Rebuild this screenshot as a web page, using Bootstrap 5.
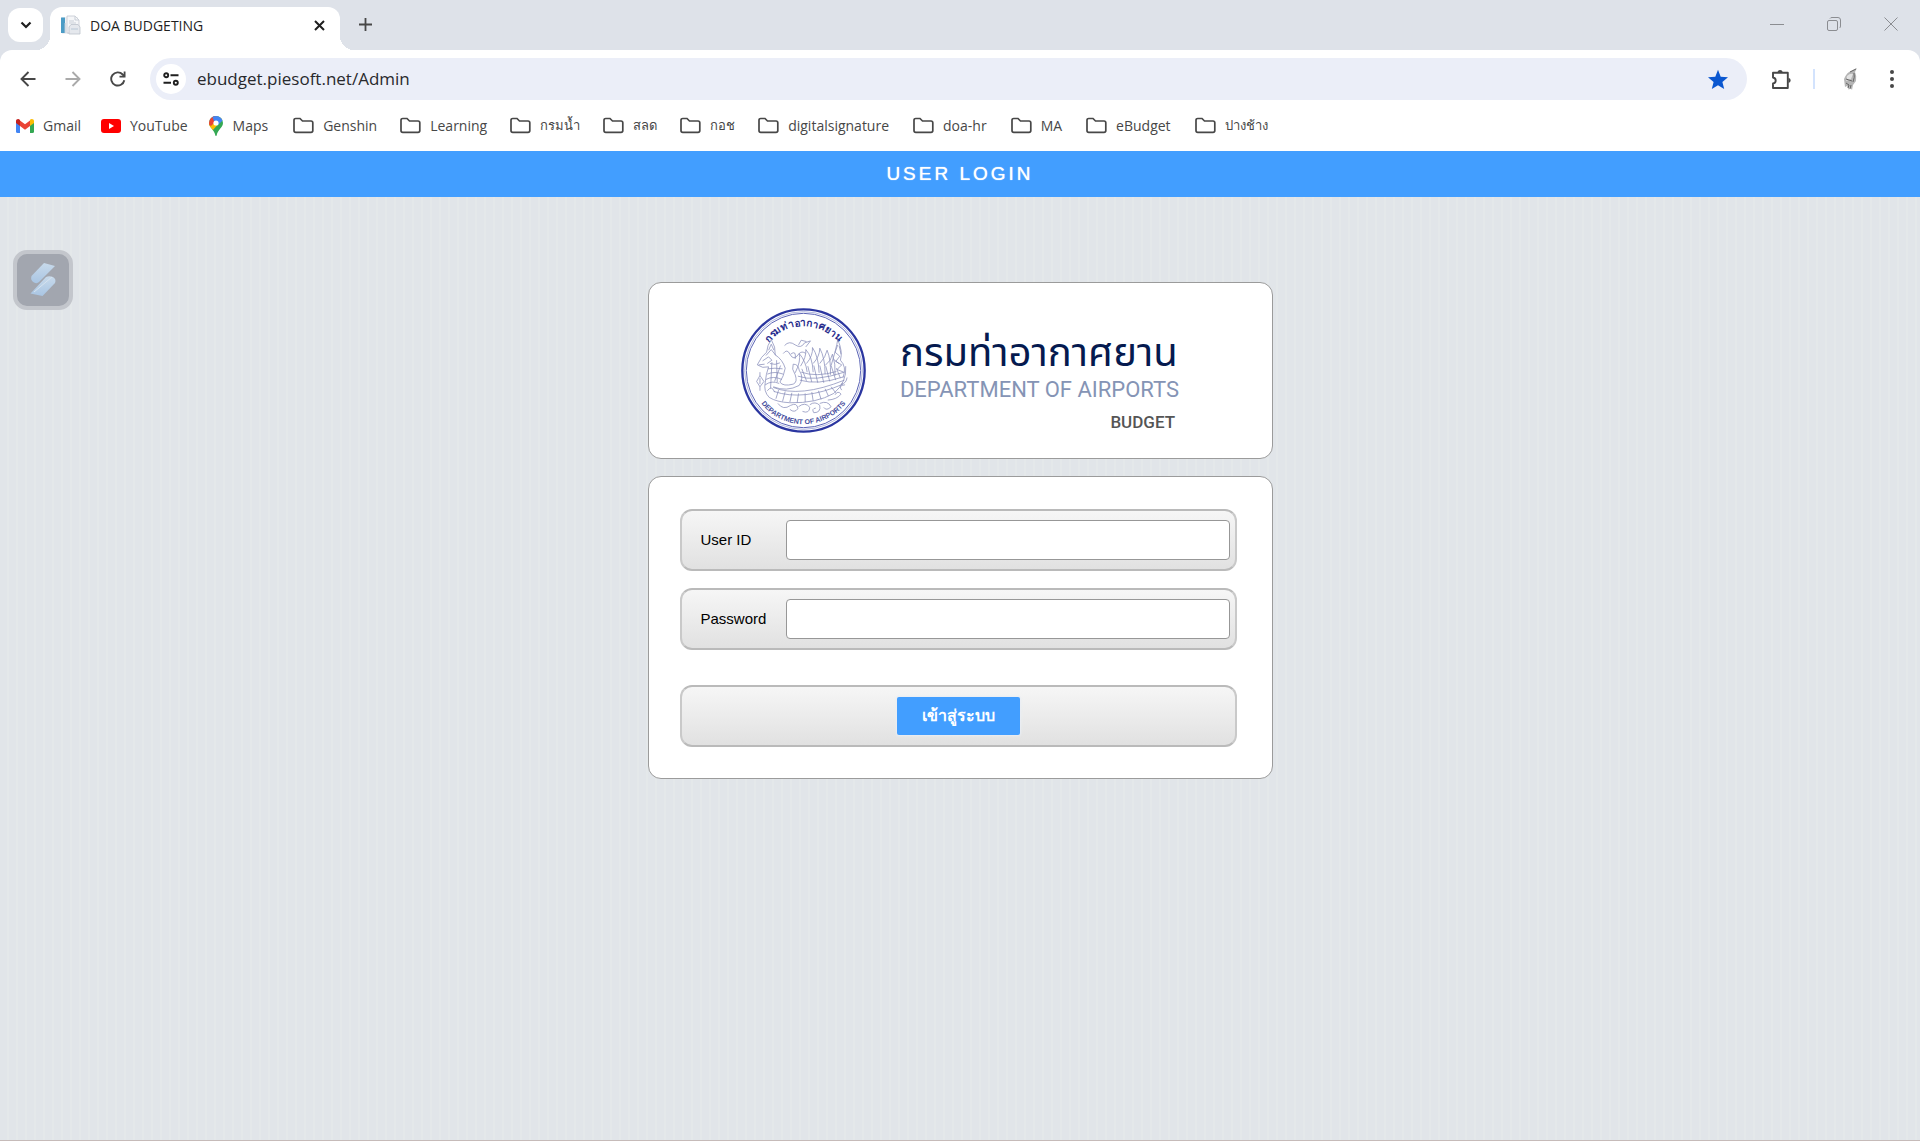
<!DOCTYPE html>
<html lang="th">
<head>
<meta charset="utf-8">
<meta name="viewport" content="width=device-width, initial-scale=1">
<title>DOA BUDGETING</title>
<link href="https://cdn.jsdelivr.net/npm/bootstrap@5.3.0/dist/css/bootstrap.min.css" rel="stylesheet">
<style>
body{font-family:"Liberation Sans",Arial,sans-serif;background:#fff;color:#000}
svg{display:block;flex:none}
.chrome-ui{font-family:"Open Sans","Noto Sans",sans-serif;color:#474747}
.plain-btn{border:0;background:none;padding:0;color:inherit;display:flex}
.tab-strip{height:50px;background:#dee2e9;padding-left:8px}
.tab-search{width:35px;height:34px;border-radius:12px;background:#fff;margin:8px 7px 0 0;color:#1f1f1f}
.page-tab{position:relative;width:290px;height:43px;margin-top:7px;padding:0 15px 7px 10px;border-radius:12px 12px 0 0;background:#fff;color:#1f1f1f;font-size:14px;gap:9px}
.page-tab::before,.page-tab::after{content:"";position:absolute;bottom:0;width:14px;height:14px}
.page-tab::before{right:100%;background:radial-gradient(circle at 0 0,transparent 14px,#fff 14px)}
.page-tab::after{left:100%;background:radial-gradient(circle at 100% 0,transparent 14px,#fff 14px)}
.new-tab{margin:18px 0 0 19px}
.win-controls{gap:43px;padding:17px 22px 0 0;color:#8b8d91}
.tool-wrap{background:#dee2e9}
.tool-row{background:#fff;border-radius:12px 12px 0 0;padding:8px 22px 0 20px}
.nav-icons{gap:29px;margin-right:24px}
.address{height:42px;border-radius:21px;background:#ebeef8;padding:0 18px 0 6px}
.site-info{width:30px;height:30px;border-radius:50%;background:#fff;margin-right:11px;color:#1f1f1f}
.address input{border:0;background:none;outline:0;padding:0;font-size:17px;color:#28292c;min-width:0}
.ext-icons{padding-left:24px}
.ext-rule{width:2px;height:20px;background:#d3e3fd;margin:0 25px 0 21px}
.menu-btn{margin-left:26px}
.marks{height:51px;background:#fff;padding:0 16px;gap:23px;font-size:14px}
.marks a{color:#474747;text-decoration:none;display:flex;align-items:center;gap:9px;white-space:nowrap}
.marks .thai{font-size:13px}
.site-links{gap:20px;margin-right:2px}
.folder-links{gap:24px;margin-left:1px}
.login-bar{height:46px;background:#429eff;color:#fff;font-size:19px;letter-spacing:3px;text-shadow:0 0 1px #fff}
.stage{background:repeating-linear-gradient(90deg,transparent 0 7px,#e4e8ea 7px 9px),#e1e5e9;border-bottom:1px solid #c6bbb9;padding-top:85px}
.floater{position:absolute;left:13px;top:53px;width:60px;height:60px;border:4px solid #c3c6cc;border-radius:14px;background:#a2a6af;padding:0}
.login-col{width:100%;max-width:625px;gap:17px}
.panel{background:#fff;border:1px solid #9b9b9b;border-radius:13px}
.brand{height:177px;gap:34px}
.brand-text{padding-top:22px}
.brand-th{font-family:"Noto Sans Thai","Noto Sans",sans-serif;font-size:40px;line-height:50px;color:#051a4f;white-space:nowrap}
.brand-en{font-family:Roboto,sans-serif;font-size:22px;line-height:22px;color:#8594b5;white-space:nowrap}
.brand-sub{font-family:Roboto,sans-serif;font-size:17px;line-height:24px;color:#555;font-weight:500;margin-top:9px;padding-right:4px}
.form-panel{padding:32px 35px 31px 31px;gap:17px}
.field-row{height:62px;border:2px solid;border-color:#bababa #c9c9c9;border-radius:12px;background:linear-gradient(#f6f6f6,#e1e1e1);padding:0 5px 0 19px}
.field-row label{width:85px;font-size:15px}
.field-row input{height:40px;border:1px solid #979797;border-radius:4px;background:#fff;padding:0 8px;min-width:0}
.submit-row{margin-top:18px;padding:0}
.enter-btn{height:38px;width:123px;border:0;border-radius:2px;background:#429eff;color:#fff;font-size:16px;font-weight:700;padding:0;box-shadow:0 0 2px 1px #e9eef4}
</style>
<script src="https://cdn.jsdelivr.net/npm/bootstrap@5.3.0/dist/js/bootstrap.bundle.min.js"></script>
</head>
<body class="d-flex flex-column min-vh-100">
<svg width="0" height="0" class="position-absolute" aria-hidden="true"><defs>
<symbol id="folder" viewBox="0 0 21 17"><path d="M1 3.2C1 2 1.8 1.5 2.700 1.500H7L9.500 4H18Q19.800 4 19.800 5.800V13.500Q19.800 15.300 18 15.300H2.800Q1 15.300 1 13.500Z" fill="none" stroke="#474747" stroke-width="1.700"/></symbol>
</defs></svg>
<header class="chrome-ui">
  <div class="tab-strip d-flex align-items-start">
    <button class="plain-btn tab-search align-items-center justify-content-center" aria-label="Search tabs"><svg width="12" height="8" viewBox="0 0 12 8"><path d="M1.500 1.500 6 6l4.500-4.500" fill="none" stroke="currentColor" stroke-width="2.200"/></svg></button>
    <div class="page-tab d-flex align-items-center">
      <svg width="21" height="20" viewBox="0 0 21 20"><path d="M2 2H18V19H2Z" fill="#eef0f3"/><path d="M1 2.500H5V18H1Z" fill="#4b9cc6"/><path d="M7 1H15L19 5V18H7Z" fill="#f5f6f8" stroke="#c3c8d0" stroke-width=".8"/><path d="M15 1V5H19M9 6H14M9 8H16" fill="none" stroke="#c9cfd8"/><path d="M9 12 11 9.500H18L20 12V19H9Z" fill="#e5e8ed" stroke="#bdc3cc" stroke-width=".8"/><path d="M11 14H18M5 8V18" stroke="#b8c7d6"/></svg>
      <span class="flex-grow-1">DOA BUDGETING</span>
      <button class="plain-btn" aria-label="Close tab"><svg width="11" height="11" viewBox="0 0 11 11"><path d="M1 1 10 10M10 1 1 10" stroke="currentColor" stroke-width="2"/></svg></button>
    </div>
    <button class="plain-btn new-tab" aria-label="New tab"><svg width="13" height="13" viewBox="0 0 13 13"><path d="M6.500 0V13M0 6.500H13" stroke="currentColor" stroke-width="1.800"/></svg></button>
    <div class="win-controls d-flex ms-auto">
      <button class="plain-btn" aria-label="Minimize"><svg width="14" height="14" viewBox="0 0 14 14"><path d="M0 7.500H14" stroke="currentColor"/></svg></button>
      <button class="plain-btn" aria-label="Restore"><svg width="14" height="14" viewBox="0 0 14 14"><rect x=".5" y="3.500" width="10" height="10" rx="1.500" fill="none" stroke="currentColor"/><path d="M3 1.500Q3.500.5 5 .5H11Q13.500.5 13.500 3V9Q13.500 10.500 12.500 11" fill="none" stroke="currentColor"/></svg></button>
      <button class="plain-btn" aria-label="Close"><svg width="14" height="14" viewBox="0 0 14 14"><path d="M.5.5 13.500 13.500M13.500.5.5 13.500" stroke="currentColor"/></svg></button>
    </div>
  </div>
  <div class="tool-wrap"><div class="tool-row d-flex align-items-center">
    <div class="nav-icons d-flex align-items-center">
      <button class="plain-btn" aria-label="Back"><svg width="16" height="16" viewBox="0 0 16 16"><path d="M15.500 8H1.500M8.500 1 1.500 8l7 7" fill="none" stroke="currentColor" stroke-width="1.900"/></svg></button>
      <button class="plain-btn" aria-label="Forward"><svg width="16" height="16" viewBox="0 0 16 16"><path d="M.5 8H14.500M7.500 1l7 7-7 7" fill="none" stroke="#aaa" stroke-width="1.900"/></svg></button>
      <button class="plain-btn" aria-label="Reload"><svg width="16" height="16" viewBox="0 0 16 16"><path d="M14.300 9.200A6.600 6.600 0 1 1 12.700 3.500L14.500 5.500" fill="none" stroke="currentColor" stroke-width="1.900"/><path d="M15.500.5V6.500H9.500V4.800H13.700V.5Z" fill="currentColor"/></svg></button>
    </div>
    <div class="address flex-grow-1 d-flex align-items-center">
      <button class="plain-btn site-info align-items-center justify-content-center" aria-label="Site information"><svg width="16" height="14" viewBox="0 0 16 14"><g fill="none" stroke="currentColor" stroke-width="1.900"><circle cx="3.200" cy="3.200" r="2"/><path d="M7.500 3.200H15.500M.5 10.800H8"/><circle cx="12.800" cy="10.800" r="2"/></g></svg></button>
      <input class="flex-grow-1" type="text" aria-label="Address" value="ebudget.piesoft.net/Admin">
      <button class="plain-btn" aria-label="Bookmarked"><svg width="22" height="21" viewBox="0 0 22 21"><path d="M11 .8 13.700 7.700 21 8.300 15.400 13 17.200 20 11 16.200 4.800 20 6.600 13 1 8.300 8.300 7.700Z" fill="#0b57d0"/></svg></button>
    </div>
    <div class="ext-icons d-flex align-items-center">
      <button class="plain-btn" aria-label="Extensions"><svg width="21" height="21" viewBox="0 0 21 21"><path d="M2 3.800H16.800V19H2V14.500C5.600 14 5.600 9 2 8.500Z" fill="none" stroke="#474747" stroke-width="1.900" stroke-linejoin="round"/><path d="M6.500 3A2.700 2.700 0 0 1 11.700 3ZM17.500 8.700A2.700 2.700 0 0 1 17.500 14Z" fill="#474747"/></svg></button>
      <span class="ext-rule"></span>
      <button class="plain-btn" aria-label="Profile"><svg width="20" height="24" viewBox="0 0 20 24"><path d="M4 12Q7 5 11 4 15 2 17 1L15 5Q17 9 16 14L13 18 12 23 10 20 9 23 7 19 5 20Z" fill="#b5b5b5"/><path d="M7 9Q10 6 13 7L11 12 6 14Z" fill="#e2e2e2"/><path d="M6 16 9 18 8 21M14 6Q15 10 13 15M11 18 10 22M6 12 12 14M10 5 16 2" fill="none" stroke="#666" stroke-width="1"/></svg></button>
      <button class="plain-btn menu-btn" aria-label="Menu"><svg width="12" height="20" viewBox="0 0 12 20" fill="#474747"><circle cx="6" cy="3" r="2"/><circle cx="6" cy="10" r="2"/><circle cx="6" cy="17" r="2"/></svg></button>
    </div>
  </div></div>
  <nav class="marks d-flex align-items-center" aria-label="Bookmarks">
    <div class="site-links d-flex align-items-center">
      <a href="#"><svg width="18" height="14" viewBox="0 0 18 14"><path d="M0 2V12.500Q0 14 1.500 14H4V5Z" fill="#4285f4"/><path d="M18 2V12.500Q18 14 16.500 14H14V5Z" fill="#34a853"/><path d="M14 1.500V7L18 4V2C18 0 15.500-.6 14 .7Z" fill="#fbbc04"/><path d="M4 7V1.500L9 5.300 14 1.500V7L9 10.800Z" fill="#ea4335"/><path d="M0 2V4L4 7V.9C2.500-.6 0 0 0 2Z" fill="#c5221f"/></svg>Gmail</a>
      <a href="#"><svg width="20" height="14" viewBox="0 0 20 14"><rect width="20" height="14" rx="3" fill="#f00"/><path d="M8 4V10L13 7Z" fill="#fff"/></svg>YouTube</a>
      <a href="#"><svg width="16" height="20" viewBox="0 0 16 20"><clipPath id="pinShape"><path d="M8 0A7 7 0 0 1 15 7C15 11.500 10 13 8.600 19.500Q8 20.500 7.400 19.500C6 13 1 11.500 1 7A7 7 0 0 1 8 0Z"/></clipPath><g clip-path="url(#pinShape)"><path d="M0 0H16V20H0Z" fill="#34a853"/><path d="M0 13V6L8 7 14 0V4L4 15Z" fill="#fbbc04"/><path d="M0 0H9L8 5 3 10 0 8Z" fill="#ea4335"/><path d="M4 0H16V3L10 9 6 5Z" fill="#4285f4"/></g><circle cx="8" cy="7" r="2.600" fill="#fff"/></svg>Maps</a>
    </div>
    <a href="#"><svg width="21" height="17"><use href="#folder"/></svg>Genshin</a>
    <a href="#"><svg width="21" height="17"><use href="#folder"/></svg>Learning</a>
    <a href="#" class="thai"><svg width="21" height="17"><use href="#folder"/></svg>กรมน้ำ</a>
    <a href="#" class="thai"><svg width="21" height="17"><use href="#folder"/></svg>สลด</a>
    <a href="#" class="thai"><svg width="21" height="17"><use href="#folder"/></svg>กอช</a>
    <a href="#"><svg width="21" height="17"><use href="#folder"/></svg>digitalsignature</a>
    <div class="folder-links d-flex align-items-center">
      <a href="#"><svg width="21" height="17"><use href="#folder"/></svg>doa-hr</a>
      <a href="#"><svg width="21" height="17"><use href="#folder"/></svg>MA</a>
      <a href="#"><svg width="21" height="17"><use href="#folder"/></svg>eBudget</a>
      <a href="#" class="thai"><svg width="21" height="17"><use href="#folder"/></svg>ปางช้าง</a>
    </div>
  </nav>
</header>
<h1 class="login-bar d-flex align-items-center justify-content-center m-0 fw-normal">USER LOGIN</h1>
<main class="stage position-relative flex-grow-1 d-flex flex-column align-items-center">
  <button class="floater" aria-label="Assistant"><svg width="52" height="52" viewBox="0 0 52 52"><defs><linearGradient id="boltA" x2="0" y2="1"><stop stop-color="#c8daeb"/><stop offset="1" stop-color="#a9c5e3"/></linearGradient></defs><path d="M27 9 38 12 22 28Q20 30 17 28.500 13 26 14.500 22Z" fill="url(#boltA)"/><path d="M13.500 39.500 29 23Q32 21.500 36 23 39.500 25 38 29L25.500 42Z" fill="url(#boltA)"/><path d="M17 38 35 23" stroke="#d6e3ef" stroke-width="1"/></svg></button>
  <div class="login-col d-flex flex-column">
    <section class="panel brand d-flex align-items-center justify-content-center">
      <svg width="125" height="125" viewBox="33 39 376 376" role="img" aria-label="Department of Airports seal">
        <g fill="none" stroke="#2b36a0"><circle cx="221" cy="227" r="184" stroke-width="7"/><circle cx="221" cy="227" r="177" stroke-width="2" stroke="#8e95cf"/><circle cx="221" cy="227" r="172" stroke-width="3" stroke="#5a63b5"/></g>
        <path id="arcTop" d="M93 187A134 134 0 0 1 349 187" fill="none"/>
        <path id="arcLow" d="M80 305A161 161 0 0 0 362 305" fill="none"/>
        <text font-size="30" font-weight="700" fill="#1f2a8c" text-anchor="middle"><textPath href="#arcTop" startOffset="50%">กรมท่าอากาศยาน</textPath></text>
        <text font-size="21" font-weight="700" fill="#434b9c" text-anchor="middle"><textPath href="#arcLow" startOffset="50%">DEPARTMENT OF AIRPORTS</textPath></text>
        <g fill="none" stroke="#858ab8" stroke-width="2.200" stroke-linejoin="round">
          <path d="M124 134Q112 150 110 172 94 184 82 210 98 222 116 216 108 238 106 262 100 290 118 308 140 322 180 324 260 326 312 296 352 262 348 214"/>
          <path d="M124 134Q138 156 136 180 158 194 166 220 162 244 150 262 160 276 190 268 204 262 196 240 184 222 190 208 206 208 208 226 224 250 208 272 170 292 130 276"/>
          <path d="M116 166 124 148 132 166M108 182 124 164 138 182M98 198 116 186 126 196 112 206M86 210 104 208M120 206Q136 212 150 204M114 222Q134 218 158 222M112 238Q134 228 160 238M108 254Q130 242 156 254M106 270Q126 256 148 266M112 288Q126 270 134 292M126 202 122 280M140 196 142 262M152 212 134 260"/>
          <path d="M90 232V242M90 242 80 260 90 276 102 260ZM90 250V268M90 276V288"/>
          <path d="M160 176Q172 160 180 178 192 200 206 178 216 166 228 176M164 152Q178 136 196 150 214 162 224 144L242 138 228 156M182 178Q200 164 196 192M206 150 214 136 230 140"/>
          <path d="M196 234Q214 198 208 176 228 198 232 232M212 214Q230 186 228 164 248 186 250 232M230 206Q250 182 248 158 266 184 268 234M250 206Q270 184 270 160 286 190 286 238M270 206Q288 186 292 166 304 194 302 240M286 212Q306 196 308 178 318 206 316 242M304 212Q320 160 324 134 340 170 332 196 352 216 340 248"/>
          <path d="M324 150 316 172 330 184 318 200 336 210 322 224 342 232M328 152 334 178M312 194 328 206M204 244Q252 262 344 232M210 256Q262 272 342 246M214 232Q260 248 320 230M216 222 230 258M234 214 246 262M252 212 264 264M270 212 282 264M288 214 300 260M304 212 318 256M320 220 332 250"/>
          <path d="M130 278Q210 310 344 256M132 290Q220 320 340 268M146 286 138 312M166 290 158 320M186 294 180 322M206 296 202 324M226 296 226 322M246 292 250 318M266 288 274 314M286 282 296 304M304 276 318 294"/>
          <path d="M144 326Q160 348 182 332 202 322 204 342 194 356 180 344M206 336Q226 320 240 338 238 358 218 350M240 330Q256 318 270 332 274 354 252 354 244 342 258 340M270 326Q294 316 304 336 290 350 282 338M294 316Q322 314 334 298 324 286 316 300M334 268Q350 266 352 248M336 286Q324 272 346 270"/>
        </g>
      </svg>
      <div class="brand-text d-flex flex-column">
        <div class="brand-th">กรมท่าอากาศยาน</div>
        <div class="brand-en">DEPARTMENT OF AIRPORTS</div>
        <div class="brand-sub align-self-end">BUDGET</div>
      </div>
    </section>
    <form class="panel form-panel d-flex flex-column">
      <div class="field-row d-flex align-items-center"><label for="userId">User ID</label><input class="flex-grow-1" id="userId" type="text"></div>
      <div class="field-row d-flex align-items-center"><label for="userPass">Password</label><input class="flex-grow-1" id="userPass" type="password"></div>
      <div class="field-row submit-row d-flex align-items-center justify-content-center"><button class="enter-btn" type="button">เข้าสู่ระบบ</button></div>
    </form>
  </div>
</main>
</body>
</html>
